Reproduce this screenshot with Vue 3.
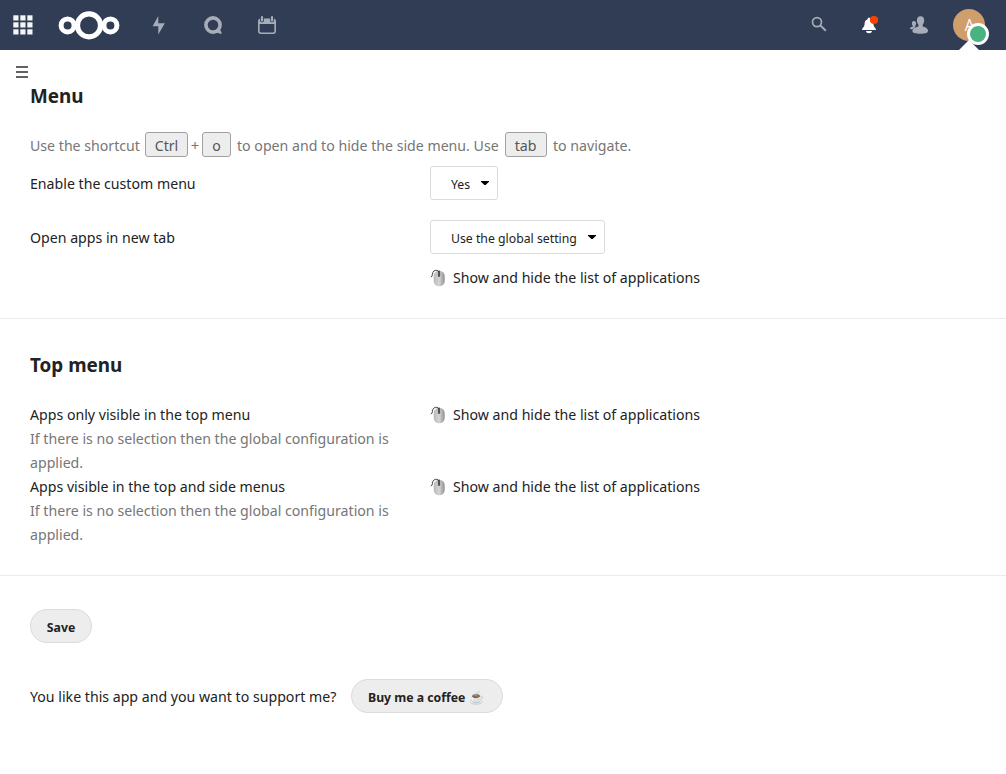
<script setup>
const gridCells = [0, 1, 2].flatMap((r) => [0, 1, 2].map((c) => ({ x: c * 7, y: r * 7 })))
const topRows = ['Apps only visible in the top menu', 'Apps visible in the top and side menus']
</script>

<template>
  <div class="page">
    <header class="bar">
      <svg class="grid" width="20" height="20" viewBox="0 0 20 20">
        <rect v-for="(c, i) in gridCells" :key="i" :x="c.x + 0.3" :y="c.y + 0.3" width="5.2" height="5.2" fill="#f4f5f7" />
      </svg>
      <svg class="logo" width="62" height="30" viewBox="0 0 62 30" fill="none" stroke="#fff">
        <circle cx="9.6" cy="15.4" r="6.5" stroke-width="5" />
        <circle cx="31" cy="15.4" r="11.5" stroke-width="5.2" />
        <circle cx="52.4" cy="15.4" r="6.5" stroke-width="5" />
      </svg>
      <svg class="bolt" width="20" height="20" viewBox="0 0 20 20" fill="#a6adb8">
        <path d="M9.3 1 3.6 11.2H9.3V19.5L15.8 8.3H9.3Z" />
      </svg>
      <svg class="talk" width="20" height="20" viewBox="0 0 20 20">
        <circle cx="10" cy="10" r="7.1" fill="none" stroke="#a6adb8" stroke-width="3.6" />
        <path d="M16 12.5 18.6 17.8Q19 19.2 17.4 18.8L12.5 17.2Z" fill="#a6adb8" />
      </svg>
      <svg class="cal" width="20" height="20" viewBox="0 0 20 20">
        <path fill="#a6adb8" fill-rule="evenodd" d="M4 3.4H16Q19 3.4 19 6.4V16Q19 19 16 19H4Q1 19 1 16V6.4Q1 3.4 4 3.4ZM2.6 9V16Q2.6 17.4 4 17.4H16Q17.4 17.4 17.4 16V9Z" />
        <path d="M5 2.4V5.4M15 2.4V5.4" stroke="#303d54" stroke-width="3.8" stroke-linecap="round" />
        <path d="M5 2.2V5.4M15 2.2V5.4" stroke="#a6adb8" stroke-width="2.2" stroke-linecap="round" />
      </svg>
      <svg class="search" width="16" height="16" viewBox="0 0 16 16" fill="none" stroke="#a6adb8">
        <circle cx="6" cy="6.1" r="4.5" stroke-width="1.7" />
        <path d="M9.3 9.4 14.8 14.7" stroke-width="2" />
      </svg>
      <svg class="bell" width="20" height="20" viewBox="0 0 20 20">
        <path fill="#fff" d="M10 2.6C9 2.6 8.7 4 8.3 4.6 5.9 5.4 5.6 7.6 5.5 9.8 5.4 12.2 3 13 3 14.9H17C17 13 14.6 12.2 14.5 9.8 14.4 7.6 14.1 5.4 11.7 4.6 11.3 4 11 2.6 10 2.6ZM6.9 16Q7.2 18.2 10 18.2T13.1 16Z" />
        <circle cx="15" cy="5" r="4.1" fill="#fb4300" />
      </svg>
      <svg class="people" width="20" height="20" viewBox="0 0 20 20" fill="#a6adb8">
        <path d="M11.6 1.2C14.2 1.2 15.2 3 15.2 5.2 15.2 7.2 14.6 8.4 13.7 9.4V11.4C16 12 19 13 19 15.6 19 18 17.4 18.8 11.4 18.8 6.2 18.8 3.4 18 3.4 15.8 3.4 13.4 7 12 9.4 11.4V9.4C8.5 8.4 7.9 7.2 7.9 5.2 7.9 3 9 1.2 11.6 1.2Z" />
        <path d="M5 6C6.6 6 7.1 7 7.1 8.5 7.1 9.6 6.7 10.2 6.2 10.7V12L3.2 14.3C1.8 14.2 1 13.8 1 13.2 1 12.4 2.6 12 3.8 11.7V10.7C3.3 10.2 2.9 9.6 2.9 8.5 2.9 7 3.4 6 5 6Z" />
      </svg>
      <div class="avatar"><span>A</span><i class="status"></i></div>
      <i class="caret"></i>
    </header>

    <div class="toggle"><i></i><i></i><i></i></div>

    <section class="menu">
      <h2><span class="t">Menu</span></h2>
      <p class="hint">
        <span class="k1"><span class="t">Use the shortcut</span></span><kbd class="ctrl"><span class="t c">Ctrl</span></kbd><span class="plus">+</span><kbd class="o"><span class="t c">o</span></kbd><span class="k2"><span class="t">to open and to hide the side menu. Use</span></span><kbd class="tab"><span class="t c">tab</span></kbd><span class="k3"><span class="t">to navigate.</span></span>
      </p>
      <div class="row first">
        <span class="label"><span class="t">Enable the custom menu</span></span>
        <div class="select yes"><span class="t">Yes</span><svg width="8" height="5" viewBox="0 0 8 5"><path d="M0 0H8V.8L4.6 4H3.4L0 .8Z" /></svg></div>
      </div>
      <div class="row second">
        <span class="label"><span class="t">Open apps in new tab</span></span>
        <div class="select glob"><span class="t">Use the global setting</span><svg width="8" height="5" viewBox="0 0 8 5"><path d="M0 0H8V.8L4.6 4H3.4L0 .8Z" /></svg></div>
      </div>
      <div class="row third">
        <span class="label"></span>
        <div class="apps">
          <svg class="mouse" width="16" height="18" viewBox="0 0 16 18"><defs><linearGradient id="mg" x2="1"><stop offset="0" stop-color="#b9b9b9" /><stop offset=".5" stop-color="#d4d4d4" /><stop offset="1" stop-color="#909090" /></linearGradient></defs><rect x="3.7" y="1.8" width="11" height="15.4" rx="5.3" fill="url(#mg)" /><path d="M9 2.6V7" stroke="#555" stroke-width="2.2" stroke-linecap="round" /><path d="M1 8.2C3.2 7.2 1.6 3.4 4 1.9 6 .8 8.2 1.3 8.8 3" fill="none" stroke="#444" stroke-width="1" /></svg>
          <span class="t">Show and hide the list of applications</span>
        </div>
      </div>
    </section>

    <section class="top">
      <h2><span class="t">Top menu</span></h2>
      <div v-for="r in topRows" :key="r" class="toprow">
        <div class="label">
          <div class="t">{{ r }}</div>
          <div class="t desc">If there is no selection then the global configuration is<br />applied.</div>
        </div>
        <div class="apps">
          <svg class="mouse" width="16" height="18" viewBox="0 0 16 18"><rect x="3.7" y="1.8" width="11" height="15.4" rx="5.3" fill="url(#mg)" /><path d="M9 2.6V7" stroke="#555" stroke-width="2.2" stroke-linecap="round" /><path d="M1 8.2C3.2 7.2 1.6 3.4 4 1.9 6 .8 8.2 1.3 8.8 3" fill="none" stroke="#444" stroke-width="1" /></svg>
          <span class="t">Show and hide the list of applications</span>
        </div>
      </div>
    </section>

    <section class="actions">
      <button class="save"><span class="t c">Save</span></button>
      <div class="support">
        <span class="like"><span class="t">You like this app and you want to support me?</span></span>
        <button class="buy"><span class="t">Buy me a coffee ☕</span></button>
      </div>
    </section>
  </div>
</template>

<style>
body { margin: 0; background: #fff; }
</style>

<style scoped>
.page { width: 1006px; height: 774px; overflow: hidden; box-sizing: border-box; background: #fff; color: #222; font: 15px/24px "Noto Sans", "Open Sans", sans-serif; }
.t { display: block; width: max-content; flex: none; white-space: nowrap; transform: scaleX(0.943); transform-origin: 0 0; }
.t.c { transform-origin: 50% 0; }
svg { display: block; flex: none; }
.bar { position: relative; display: flex; align-items: center; height: 50px; background: #303d54; box-sizing: border-box; padding-left: 13px; }
.logo { margin-left: 25px; }
.bolt { margin-left: 29px; }
.talk { margin-left: 34px; }
.cal { margin-left: 34px; }
.search { margin: 0 0 2px 534px; }
.bell { margin-left: 32px; }
.people { margin-left: 30px; }
.avatar { position: relative; display: flex; align-items: center; justify-content: center; width: 32px; height: 32px; margin-left: 24px; border-radius: 50%; background: #d09e6d; color: #fff; font: 17px/24px "Open Sans", sans-serif; }
.avatar span { transform: scaleX(0.88); }
.status { position: absolute; left: 14px; top: 14px; width: 16px; height: 16px; border: 3px solid #fff; border-radius: 50%; background: #49b382; z-index: 1; }
.caret { position: absolute; left: 959px; bottom: 0; border: 10px solid transparent; border-top: 0; border-bottom-color: #fff; }
.toggle { display: flex; flex-direction: column; gap: 3px; padding: 16px 0 0 16px; height: 12px; }
.toggle i { display: block; width: 12px; height: 2px; background: #626262; }
h2 { margin: 0; font-size: 20px; font-weight: 700; line-height: 30px; }
.menu { height: 237px; padding: 3px 30px 0; border-bottom: 1px solid #ebebeb; }
.hint { display: flex; align-items: center; margin: 21px 0 0; height: 25px; color: #767676; white-space: nowrap; }
.hint > span { display: block; flex: none; height: 24px; }
.k1 { width: 115px; }
.plus { width: 14px; text-align: center; }
.k2 { width: 262px; margin: 0 6px; }
.k3 { margin-left: 6px; }
kbd { display: flex; align-items: center; justify-content: center; box-sizing: border-box; height: 25px; border: 1px solid #a0a0a0; border-radius: 3px; background: #ededed; color: #555; font: inherit; padding-top: 1px; }
.ctrl { width: 43px; }
.o { width: 29px; }
.tab { width: 42px; }
.row { display: flex; align-items: center; height: 34px; }
.row .label { width: 400px; }
.first { margin-top: 9px; }
.second { margin-top: 20px; }
.third { margin-top: 11px; height: 24px; }
.select { position: relative; box-sizing: border-box; height: 34px; display: flex; align-items: center; border: 1px solid #dbdbdb; border-radius: 3px; padding: 2px 0 0 20px; font-size: 13px; white-space: nowrap; }
.select svg { position: absolute; right: 8px; top: 14px; }
.yes { width: 68px; }
.glob { width: 175px; }
.apps { display: flex; white-space: nowrap; height: 24px; }
.mouse { margin: 4px 7px 0 0; }
.top { height: 223px; padding: 31px 30px 2px; border-bottom: 1px solid #ebebeb; }
.top h2 { margin-bottom: 22px; }
.toprow { display: flex; height: 72px; white-space: nowrap; }
.toprow .label { width: 400px; }
.desc { color: #767676; }
.actions { padding: 33px 30px 0; }
button { display: flex; align-items: center; justify-content: center; box-sizing: border-box; height: 34px; padding: 2px 0 0; border: 1px solid #dbdbdb; border-radius: 17px; background: #ededed; color: #222; font: 700 13px/20px "Noto Sans", "Open Sans", sans-serif; white-space: nowrap; }
.save { width: 62px; }
.support { display: flex; align-items: center; margin-top: 36px; }
.like { width: 321px; white-space: nowrap; }
.buy { width: 152px; justify-content: flex-start; padding-left: 16px; }
</style>
